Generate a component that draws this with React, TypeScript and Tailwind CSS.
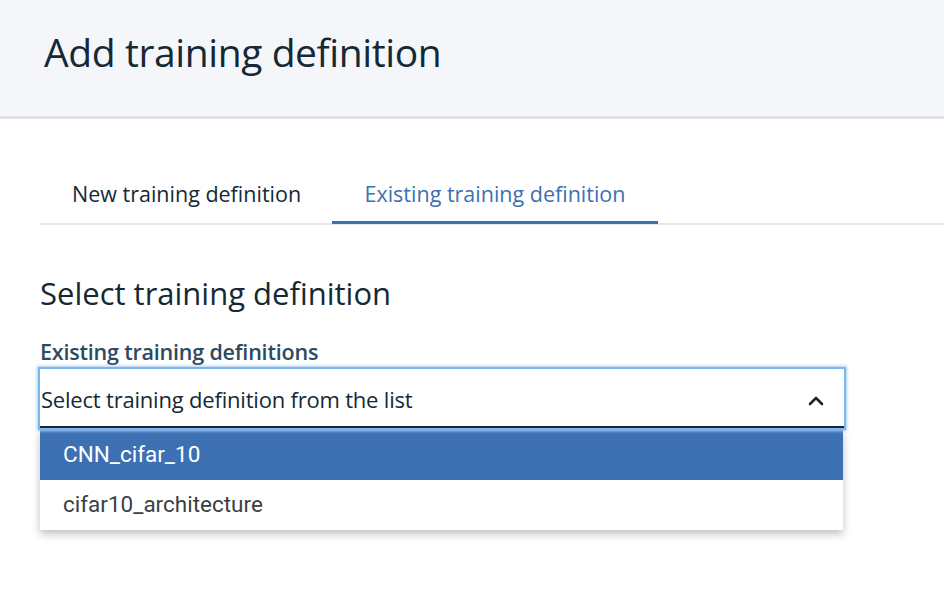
import React from 'react';
import { ChevronUp } from 'lucide-react';

const options = ['CNN_cifar_10', 'cifar10_architecture'];

export default function App() {
  return (
    <div className="w-[944px] h-[609px] bg-white overflow-hidden text-[#152935]" style={{ fontFamily: '"Open Sans", Roboto, sans-serif' }}>
      <header className="h-[119px] bg-[#f4f6fa] border-b-[3px] border-[#dfe3e6] pl-[44px] pt-[25px]">
        <h1 className="text-[39px] leading-[54px] tracking-[-0.4px]">Add training definition</h1>
      </header>

      <div className="pl-[40px] pt-[51px]">
        <div className="flex border-b-2 border-[#e6e9ec]">
          <button className="w-[292px] h-[53px] pl-[32px] text-left text-[21.5px] text-[#152935] pb-[5px]">New training definition</button>
          <button className="relative w-[326px] h-[53px] text-center text-[21.5px] text-[#3d70b2] pb-[5px]">
            Existing training definition
            <span className="absolute left-0 right-0 -bottom-[1px] h-[3px] bg-[#3d70b2]" />
          </button>
        </div>

        <h2 className="mt-[48px] text-[31px] leading-[40px]">Select training definition</h2>

        <div className="mt-[25px] text-[21.5px] font-semibold text-[#2d4a5e] leading-[28px] tracking-[-0.2px]">Existing training definitions</div>

        <div className="relative mt-[1px] w-[806px]">
          <div className="relative -ml-[2px] h-[63px] w-[808px] border-2 border-[#7bb6f2] shadow-[0_0_3px_1px_#a9d0f7] bg-white flex items-center justify-between">
            <span className="pl-[1px] text-[22px] pt-[1px] tracking-[-0.2px]">Select training definition from the list</span>
            <ChevronUp className="w-[24px] h-[24px] mr-[16px] mt-[5px] text-[#152935]" strokeWidth={2.6} />
            <span className="absolute left-0 right-0 bottom-0 h-[2px] bg-[#152935]" />
          </div>
          <ul className="w-[803px] bg-white shadow-[0_4px_8px_rgba(0,0,0,0.25)]" style={{ fontFamily: 'Roboto, sans-serif' }}>
            {options.map((opt, i) => (
              <li
                key={opt}
                className={
                  i === 0
                    ? 'h-[50px] flex items-center pl-[23px] text-[22.5px] bg-[#3d70b2] text-white'
                    : 'h-[50px] flex items-center pl-[23px] text-[22.5px] text-[#3a3f44]'
                }
              >
                {opt}
              </li>
            ))}
          </ul>
        </div>
      </div>
    </div>
  );
}
